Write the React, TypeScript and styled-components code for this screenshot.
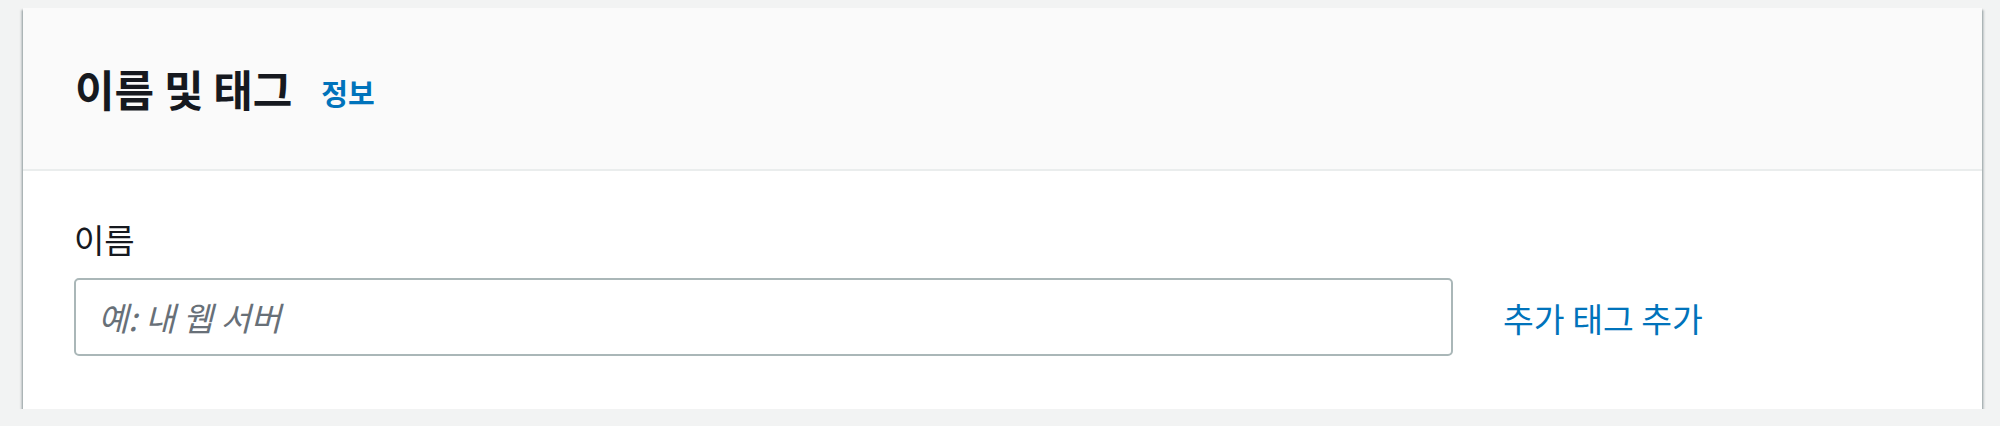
import React from "react";
import styled, { createGlobalStyle } from "styled-components";

const Global = createGlobalStyle`
  html, body { margin: 0; padding: 0; background: #f2f3f3; }
  body { font-family: "Noto Sans CJK KR", "Noto Sans", sans-serif; }
  * { box-sizing: border-box; }
`;

const Page = styled.div`
  padding: 8px 18px 0 23px;
`;

const Card = styled.section`
  background: #ffffff;
  box-shadow: 0 2px 2px 0 rgba(0, 28, 36, 0.45), 2px 2px 2px 0 rgba(0, 28, 36, 0.18),
    -2px 2px 2px 0 rgba(0, 28, 36, 0.18);
`;

const Header = styled.header`
  height: 163px;
  background: #fafafa;
  border-bottom: 2px solid #eaeded;
  display: flex;
  align-items: center;
  padding: 0 52px;
  gap: 29px;
`;

const Title = styled.h2`
  margin: 0;
  font-size: 43px;
  font-weight: 700;
  color: #16191f;
  line-height: 1.2;
`;

const InfoLink = styled.a`
  font-size: 29px;
  font-weight: 700;
  color: #0073bb;
  text-decoration: none;
  margin-top: 6px;
`;

const Body = styled.div`
  padding: 46px 52px 53px 51px;
`;

const Label = styled.label`
  display: block;
  font-size: 33px;
  color: #16191f;
  line-height: 44px;
  margin-bottom: 17px;
`;

const Row = styled.div`
  display: flex;
  align-items: center;
  gap: 50px;
`;

const Input = styled.input`
  width: 1379px;
  height: 78px;
  border: 2px solid #aab7b8;
  border-radius: 5px;
  padding: 0 22px;
  font-family: "Noto Sans CJK KR", "Noto Sans", sans-serif;
  font-size: 33px;
  color: #16191f;
  background: #fff;
  outline: none;
  &::placeholder {
    color: #687078;
    font-style: italic;
  }
`;

const AddLink = styled.a`
  font-size: 33.5px;
  color: #0073bb;
  text-decoration: none;
`;

export default function App() {
  return (
    <>
      <Global />
      <Page>
        <Card>
          <Header>
            <Title>이름 및 태그</Title>
            <InfoLink href="#">정보</InfoLink>
          </Header>
          <Body>
            <Label htmlFor="name">이름</Label>
            <Row>
              <Input id="name" placeholder="예: 내 웹 서버" />
              <AddLink href="#">추가 태그 추가</AddLink>
            </Row>
          </Body>
        </Card>
      </Page>
    </>
  );
}
